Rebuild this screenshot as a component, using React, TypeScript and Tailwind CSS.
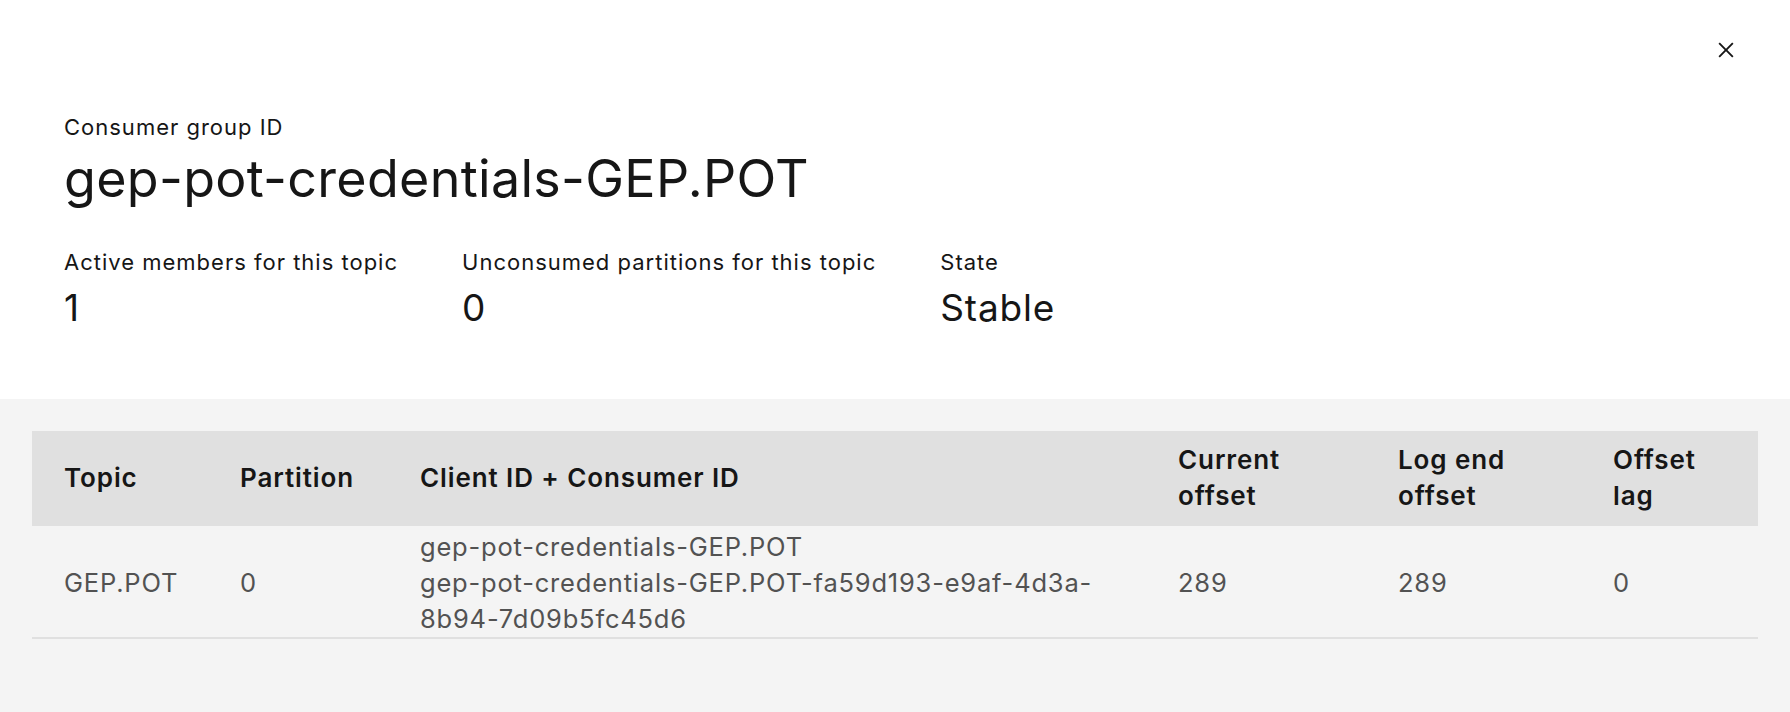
const STATS = [
  { label: 'Active members for this topic', value: '1' },
  { label: 'Unconsumed partitions for this topic', value: '0' },
  { label: 'State', value: 'Stable' },
];

export default function App() {
  return (
    <div className="relative flex h-[712px] w-full flex-col bg-white font-['Inter',sans-serif] text-[#161616]">
      {/* Close button */}
      <button
        className="absolute right-[49px] top-[35px] flex h-[30px] w-[30px] items-center justify-center"
        aria-label="Close"
      >
        <svg width="30" height="30" viewBox="0 0 32 32" fill="#161616">
          <path d="M17.4141 16L24 9.4141 22.5859 8 16 14.5859 9.4143 8 8 9.4141 14.5859 16 8 22.5859 9.4143 24 16 17.4141 22.5859 24 24 22.5859 17.4141 16z" />
        </svg>
      </button>

      {/* Header */}
      <div className="px-16 pt-[113px] pb-[67px]">
        <p className="text-[22px] leading-[28px] tracking-[1px]">Consumer group ID</p>
        <h2 className="mt-[3px] text-[52px] leading-[70px] font-normal tracking-[0.3px]">gep-pot-credentials-GEP.POT</h2>

        <div className="mt-[34px] flex gap-16">
          {STATS.map(s => (
            <div key={s.label}>
              <p className="text-[22px] leading-[28px] tracking-[1px]">{s.label}</p>
              <p className="mt-[7px] text-[37px] leading-[49px] tracking-[0.8px]">{s.value}</p>
            </div>
          ))}
        </div>
      </div>

      {/* Table */}
      <div className="flex-1 bg-[#f4f4f4] px-8 pt-8">
        <table className="w-full table-fixed border-collapse text-left">
          <colgroup>
            <col className="w-[176px]" />
            <col className="w-[180px]" />
            <col className="w-[758px]" />
            <col className="w-[220px]" />
            <col className="w-[215px]" />
            <col className="w-[177px]" />
          </colgroup>
          <thead>
            <tr className="bg-[#e0e0e0] text-[26px] leading-[36px] tracking-[0.9px]">
              <th className="px-8 pt-[11px] pb-[12px] align-middle font-semibold whitespace-nowrap">Topic</th>
              <th className="px-8 pt-[11px] pb-[12px] align-middle font-semibold whitespace-nowrap">Partition</th>
              <th className="px-8 pt-[11px] pb-[12px] align-middle font-semibold whitespace-nowrap">Client ID + Consumer ID</th>
              <th className="px-8 pt-[11px] pb-[12px] align-middle font-semibold whitespace-nowrap">Current<br />offset</th>
              <th className="px-8 pt-[11px] pb-[12px] align-middle font-semibold whitespace-nowrap">Log end<br />offset</th>
              <th className="px-8 pt-[11px] pb-[12px] align-middle font-semibold whitespace-nowrap">Offset<br />lag</th>
            </tr>
          </thead>
          <tbody>
            <tr className="border-b-2 border-[#e0e0e0] text-[25.5px] leading-[36px] tracking-[0.8px] text-[#525252]">
              <td className="px-8 pt-[3px] align-middle">GEP.POT</td>
              <td className="px-8 pt-[3px] align-middle">0</td>
              <td className="px-8 pt-[3px] align-middle whitespace-nowrap">
                <span className="block">gep-pot-credentials-GEP.POT</span>
                <span className="block">gep-pot-credentials-GEP.POT-fa59d193-e9af-4d3a-</span>
                <span className="block">8b94-7d09b5fc45d6</span>
              </td>
              <td className="px-8 pt-[3px] align-middle">289</td>
              <td className="px-8 pt-[3px] align-middle">289</td>
              <td className="px-8 pt-[3px] align-middle">0</td>
            </tr>
          </tbody>
        </table>
      </div>
    </div>
  );
}
